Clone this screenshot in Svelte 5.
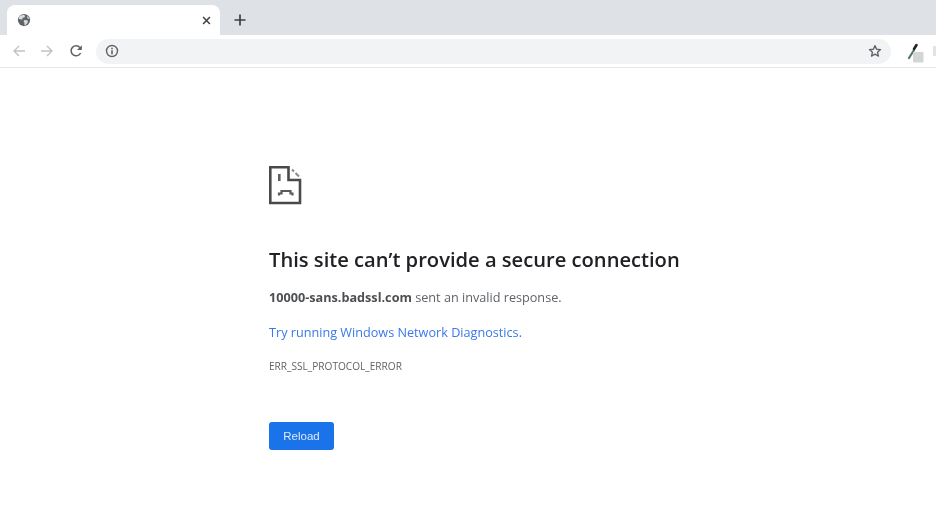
<script>
  const title = "This site can\u2019t provide a secure connection";
</script>

<div class="browser">
  <header class="tabstrip">
    <div class="tab">
      <svg class="globe" viewBox="0 0 16 16" width="14" height="14"><circle cx="8" cy="8" r="7" fill="#5f6368"/><path d="M3 3.5 L7 2 L9.5 3 L8.5 5 L6.5 5.5 L6 7.5 L3 7 L1.8 6 Z M8.5 8 L12.5 8.5 L12 11.5 L9.5 14 L8.5 14 L8.5 11 L7.5 9.5 Z M12 3.5 L14.3 6.5 L12.5 6.5 L11.5 5 Z" fill="#d8dadd"/></svg>
      <svg class="close" viewBox="0 0 10 10" width="9" height="9"><path d="M1.2 1.2 L8.8 8.8 M8.8 1.2 L1.2 8.8" stroke="#3c4043" stroke-width="1.7" fill="none"/></svg>
    </div>
    <svg class="plus" viewBox="0 0 12 12" width="12" height="12"><path d="M6 0.5 V11.5 M0.5 6 H11.5" stroke="#3c4043" stroke-width="1.7" fill="none"/></svg>
  </header>
  <nav class="toolbar">
    <svg viewBox="0 0 14 14" width="14" height="14" class="nav"><path d="M13 7 H2 M7 2 L2 7 L7 12" stroke="#c0c2c5" stroke-width="1.4" fill="none"/></svg>
    <svg viewBox="0 0 14 14" width="14" height="14" class="nav"><path d="M1 7 H12 M7 2 L12 7 L7 12" stroke="#c0c2c5" stroke-width="1.4" fill="none"/></svg>
    <svg viewBox="0 0 14 14" width="14" height="14" class="nav reload"><path d="M11.6 9 A5 5 0 1 1 11 3.6" stroke="#5f6368" stroke-width="1.5" fill="none"/><path d="M12.8 1.2 V6 H8 Z" fill="#5f6368"/></svg>
    <div class="omnibox">
      <svg viewBox="0 0 14 14" width="14" height="14"><circle cx="7" cy="7" r="5.5" stroke="#5f6368" stroke-width="1.4" fill="none"/><path d="M7 6.2 V10.2 M7 3.7 V5.2" stroke="#5f6368" stroke-width="1.6"/></svg>
      <svg class="star" viewBox="0 0 16 16" width="14" height="14"><path d="M8 1.8 L9.8 6 L14.4 6.4 L10.9 9.4 L12 13.9 L8 11.5 L4 13.9 L5.1 9.4 L1.6 6.4 L6.2 6 Z" stroke="#5f6368" stroke-width="1.5" fill="none" stroke-linejoin="round"/></svg>
    </div>
    <svg class="ext" viewBox="0 0 24 24" width="24" height="24"><path d="M6 19 L11 11" stroke="#4f7a62" stroke-width="2.2" stroke-linecap="round"/><path d="M11 10 L13.5 6" stroke="#222" stroke-width="2.6" stroke-linecap="round"/><rect x="10" y="13" width="10.5" height="10.5" rx="1" fill="#d4d5d6"/></svg>
    <div class="edge"></div>
  </nav>
  <main class="page">
    <svg class="sad" viewBox="0 0 33 39" width="33" height="39">
      <path d="M1.3 1.3 H19.5 V14 H31 V37 H1.3 Z" stroke="#4a4a4a" stroke-width="2.6" fill="none"/>
      <path d="M23 3.5 L25 5.5 M26.5 7 L30 10.5" stroke="#8a8a8a" stroke-width="2"/>
      <rect x="9" y="8" width="2.6" height="7" fill="#5f5f5f"/>
      <path d="M10 29.5 V27.5 H12.5 V25 H21.5 V27.5 H23.5 V29.5" stroke="#5a5a5a" stroke-width="2.2" fill="none"/>
    </svg>
    <h1>{title}</h1>
    <p class="msg"><strong>10000-sans.badssl.com</strong> sent an invalid response.</p>
    <p class="link">Try running Windows Network Diagnostics.</p>
    <p class="code">ERR_SSL_PROTOCOL_ERROR</p>
    <button>Reload</button>
  </main>
</div>

<style>
  :global(body) { margin: 0; background: #fff; overflow: hidden; }
  .browser { width: 936px; height: 526px; overflow: hidden; font-family: "Open Sans", "Noto Sans", sans-serif; filter: blur(0.4px); }
  .tabstrip { height: 35px; background: #dee1e6; display: flex; align-items: flex-end; padding-left: 7px; box-sizing: border-box; }
  .tab { width: 213px; height: 30px; background: #fff; border-radius: 8px 8px 0 0; display: flex; align-items: center; justify-content: space-between; padding: 0 9px 0 10px; box-sizing: border-box; }
  .plus { margin: 0 0 9px 14px; }
  .toolbar { height: 33px; background: #fff; border-bottom: 1px solid #e8e9eb; box-sizing: border-box; display: flex; align-items: center; padding: 0 0 0 12px; }
  .nav { margin-right: 14px; flex: none; }
  .nav.reload { margin-left: 1px; margin-right: 13px; }
  .omnibox { width: 795px; height: 25px; background: #f1f3f4; border-radius: 13px; display: flex; align-items: center; justify-content: space-between; padding: 0 9px 0 9px; box-sizing: border-box; flex: none; }
  .ext { margin-left: 12px; flex: none; }
  .edge { width: 4px; height: 10px; background: #e3e3e3; margin-left: 6px; flex: none; }
  .page { padding: 98px 0 0 269px; color: #202124; }
  .sad { display: block; }
  h1 { margin: 38px 0 0; font-size: 20.15px; line-height: 32px; font-weight: 600; color: #202124; white-space: nowrap; }
  p { margin: 0; white-space: nowrap; }
  .msg { margin-top: 12px; font-size: 12.67px; line-height: 20px; color: #5f6368; }
  .msg strong { font-weight: 700; color: #4d4f52; }
  .link { margin-top: 15px; font-size: 12.67px; line-height: 20px; color: #3b78e7; }
  .code { margin-top: 14px; font-size: 10.1px; line-height: 20px; color: #5f6368; }
  button { display: block; margin-top: 46px; width: 65px; height: 28px; padding: 0; border: 0; border-radius: 3px; background: #1a73e8; color: #dfeafc; font-family: "Liberation Sans", sans-serif; font-size: 11.5px; }
</style>
